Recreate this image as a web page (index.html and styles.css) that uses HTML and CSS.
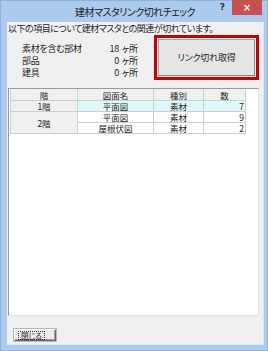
FILE: index.html
```html
<!DOCTYPE html>
<html lang="ja">
<head>
<meta charset="utf-8">
<link rel="stylesheet" href="styles.css">
</head>
<body>
<div class="window">
  <div class="titlebar">
    <div class="tb-side"></div>
    <div class="title">建材マスタリンク切れチェック</div>
    <div class="tb-side tb-right">
      <span class="help">?</span>
      <span class="close">×</span>
    </div>
  </div>
  <div class="client">
    <div class="msg">以下の項目について建材マスタとの関連が切れています。</div>
    <div class="summary">
      <div class="counts">
        <span class="lbl">素材を含む部材</span><span class="num">18</span><span class="unit">ヶ所</span>
        <span class="lbl">部品</span><span class="num">0</span><span class="unit">ヶ所</span>
        <span class="lbl">建具</span><span class="num">0</span><span class="unit">ヶ所</span>
      </div>
      <div class="highlight">
        <div class="btn-link">リンク切れ取得</div>
      </div>
    </div>
    <div class="listbox">
      <table class="grid">
        <colgroup>
          <col class="c1"><col class="c2"><col class="c3"><col class="c4">
        </colgroup>
        <thead>
          <tr><th>階</th><th>図面名</th><th>種別</th><th>数</th></tr>
        </thead>
        <tbody>
          <tr class="sel"><th>1階</th><td>平面図</td><td>素材</td><td class="n">7</td></tr>
          <tr><th rowspan="2">2階</th><td>平面図</td><td>素材</td><td class="n">9</td></tr>
          <tr><td>屋根伏図</td><td>素材</td><td class="n">2</td></tr>
        </tbody>
      </table>
    </div>
    <div class="footer">
      <div class="btn-close"><span class="focus">閉じる</span></div>
    </div>
  </div>
</div>
</body>
</html>
```

FILE: styles.css
```css
html, body {
  margin: 0;
  padding: 0;
}
body {
  width: 268px;
  height: 351px;
  overflow: hidden;
  font-family: "Noto Sans CJK JP", "Noto Sans", sans-serif;
  font-feature-settings: "palt";
  color: #1e1e1e;
}
.window {
  box-sizing: border-box;
  width: 268px;
  height: 351px;
  background: #aacbee;
  border: 1px solid #8fb2da;
  display: flex;
  flex-direction: column;
}
.titlebar {
  height: 21px;
  display: grid;
  grid-template-columns: 1fr auto 1fr;
  flex: none;
}
.title {
  font-size: 10px;
  letter-spacing: -0.5px;
  line-height: 21px;
  color: #222;
  padding-left: 2px;
  white-space: nowrap;
}
.tb-right {
  display: flex;
  justify-content: flex-end;
  align-items: flex-start;
}
.help {
  flex: none;
  font-family: "DejaVu Sans", sans-serif;
  font-weight: bold;
  font-size: 9px;
  line-height: 13px;
  color: #333;
  margin-right: 7px;
}
.close {
  flex: none;
  width: 30px;
  height: 15px;
  margin-top: -1px;
  margin-right: 5px;
  background: #c75050;
  color: #fff;
  font-family: "DejaVu Sans", sans-serif;
  font-size: 10px;
  font-weight: bold;
  line-height: 15px;
  text-align: center;
}
.client {
  flex: 1;
  margin: 0 3px 5px 6px;
  background: #f0f0f0;
  border-right: 1px solid #d8e6f5;
  border-bottom: 1px solid #d8e6f5;
  padding: 0 4px 0 1px;
  display: flex;
  flex-direction: column;
}
.msg {
  font-size: 9px;
  letter-spacing: -0.5px;
  line-height: 13px;
  height: 13px;
  white-space: nowrap;
}
.summary {
  display: flex;
  height: 45px;
}
.counts {
  display: grid;
  grid-template-columns: 78px 16px auto;
  column-gap: 3px;
  grid-auto-rows: 12px;
  font-size: 9px;
  letter-spacing: -0.3px;
  line-height: 12px;
  padding-top: 8px;
  margin-left: 14px;
  align-content: start;
}
.num {
  text-align: right;
}
.highlight {
  margin-left: auto;
  box-sizing: border-box;
  width: 105px;
  height: 45px;
  border: 3px solid #c80000;
  padding: 1px;
  display: flex;
}
.btn-link {
  flex: 1;
  box-sizing: border-box;
  border: 1px solid #a9a9a9;
  border-right-color: #8a8a8a;
  border-bottom-color: #8a8a8a;
  background: #e5e5e5;
  display: flex;
  align-items: center;
  justify-content: center;
  font-size: 9px;
  letter-spacing: -0.2px;
}
.listbox {
  margin-top: 8px;
  height: 228px;
  box-sizing: border-box;
  background: #fff;
  border: 1px solid #9a9a9a;
  border-right-color: #e2e2e2;
  border-bottom-color: #e2e2e2;
  padding-left: 1px;
  flex: none;
}
.grid {
  border-collapse: collapse;
  table-layout: fixed;
  width: 235px;
  font-size: 8.5px;
}
.c1 { width: 67px; }
.c2 { width: 76px; }
.c3 { width: 50px; }
.c4 { width: 42px; }
.grid th, .grid td {
  border: 1px solid #cfcfcf;
  height: 10px;
  line-height: 10px;
  padding: 0 1px;
  text-align: center;
  font-weight: normal;
  white-space: nowrap;
}
.grid th {
  background: #f0f0f0;
}
.grid thead th {
  border-top-color: #f0f0f0;
}
.grid tr.sel td {
  background: #dcfafa;
}
.grid td.n {
  text-align: right;
}
.footer {
  margin-top: 13px;
  padding-left: 6px;
  display: flex;
}
.btn-close {
  box-sizing: border-box;
  width: 42px;
  height: 12px;
  background: #ececec;
  border: 1px solid;
  border-color: #ffffff #696969 #696969 #ffffff;
  box-shadow: inset -1px -1px 0 #a0a0a0, 0 0 0 1px #b8b8b8;
  display: flex;
  align-items: center;
  padding-left: 4px;
}
.focus {
  font-size: 7.5px;
  line-height: 7px;
  height: 7px;
  padding: 0 2px;
  outline: 1px dotted #333;
  white-space: nowrap;
}
```
